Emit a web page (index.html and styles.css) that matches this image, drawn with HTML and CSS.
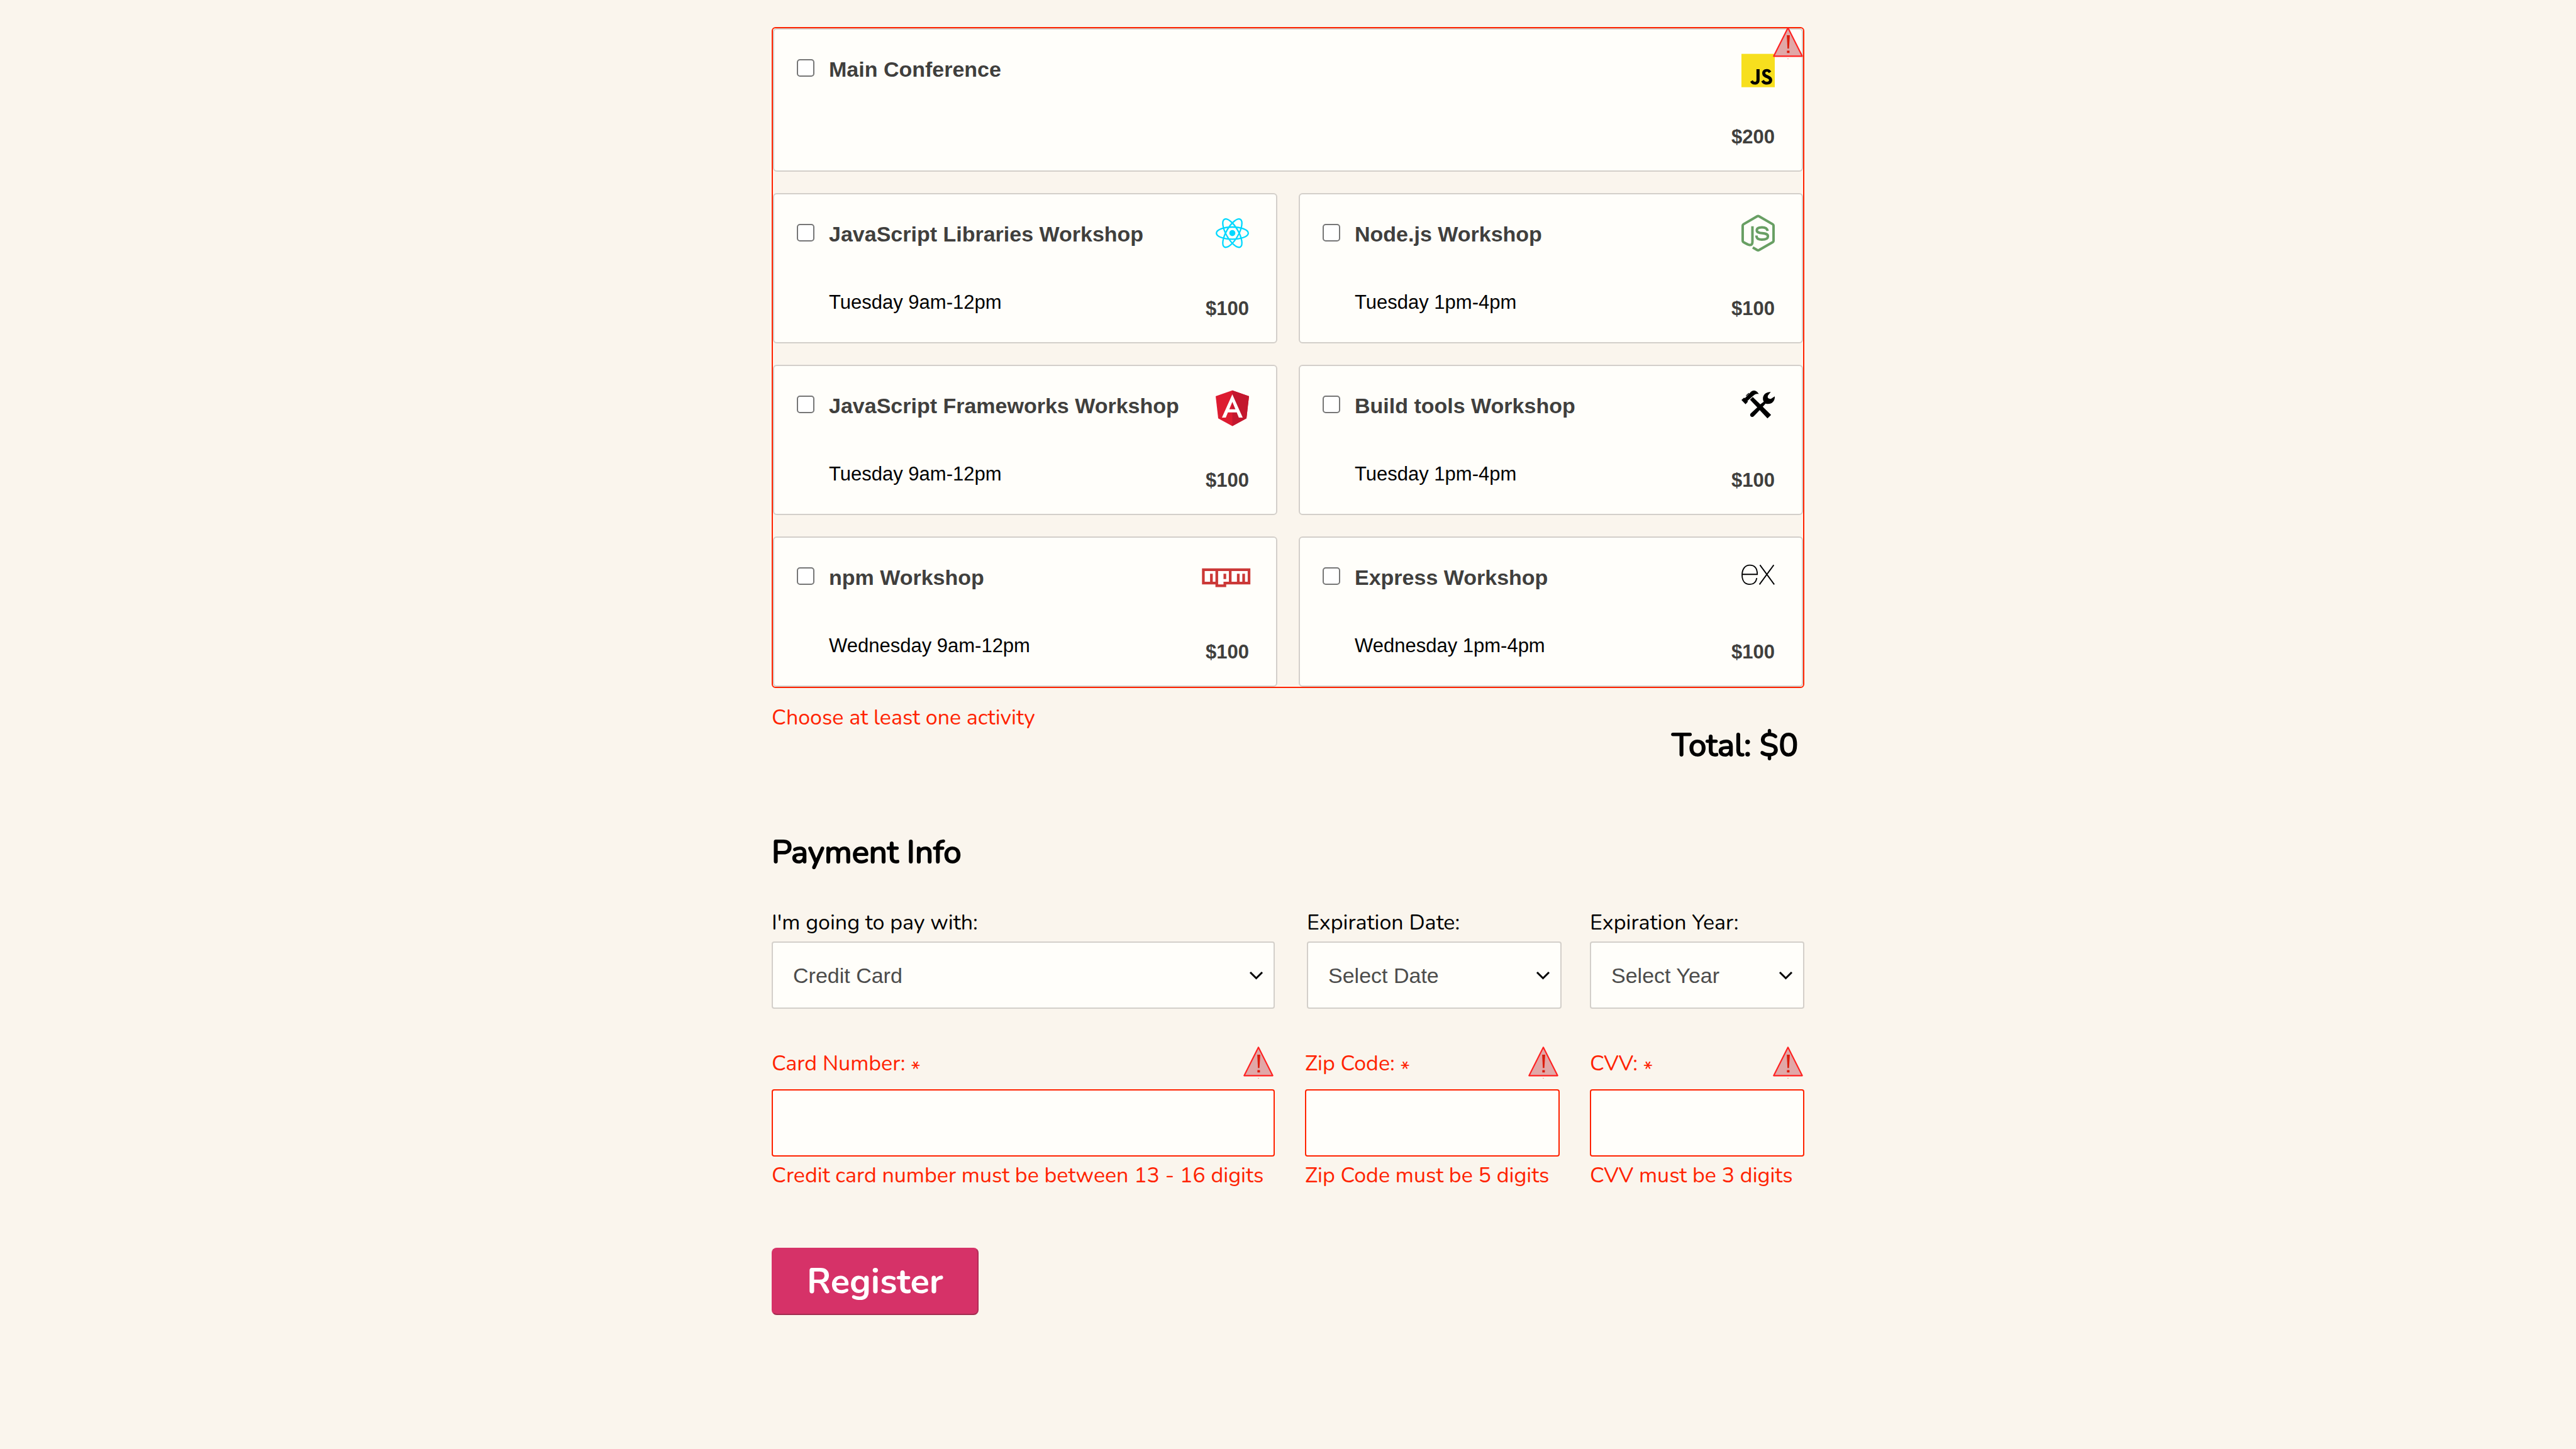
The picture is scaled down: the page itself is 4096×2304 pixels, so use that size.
FILE: index.html
```html
<!DOCTYPE html>
<html lang="en">
<head>
<meta charset="utf-8">
<title>Register for the conference</title>
<link rel="stylesheet" href="styles.css">
</head>
<body>
<svg class="defs" aria-hidden="true">
  <symbol id="warning" viewBox="0 0 90 97">
    <path d="M45 4 2.500 88.500H87.500Z" fill="#e1a7a7" stroke="#ff2222" stroke-width="4" stroke-linejoin="round"/>
    <path d="M41.500 26H50.500L48 66H43.500Z" fill="#da1c0c"/>
    <rect x="42" y="72" width="7.500" height="7" fill="#da1c0c"/>
    <rect x="43.500" y="96" width="3" height="1" fill="#ff2222"/>
  </symbol>
</svg>

<form class="form" novalidate>
  <fieldset class="activities">
    <label class="card card-wide">
      <input type="checkbox" class="check" name="all">
      <span class="info"><span class="title">Main Conference</span></span>
      <span class="side">
        <svg class="icon" viewBox="0 0 100 131" aria-hidden="true">
          <rect y="12" width="100" height="100" fill="#f7df1e"/>
          <path transform="translate(0 12) scale(.15873)" d="m423.200 492.190c12.690 20.720 29.200 35.950 58.400 35.950 24.530 0 40.200-12.260 40.200-29.200 0-20.300-16.100-27.490-43.100-39.300l-14.800-6.350c-42.720-18.200-71.100-41-71.100-89.200 0-44.400 33.830-78.200 86.700-78.200 37.640 0 64.700 13.100 84.200 47.400l-46.100 29.600c-10.150-18.200-21.100-25.370-38.100-25.370-17.340 0-28.330 11-28.330 25.370 0 17.760 11 24.950 36.400 35.950l14.800 6.340c50.300 21.570 78.700 43.560 78.700 93 0 53.300-41.870 82.500-98.100 82.500-54.980 0-90.500-26.200-107.880-60.540zm-209.130 5.130c9.300 16.500 17.760 30.450 38.100 30.450 19.450 0 31.720-7.610 31.720-37.200v-201.300h59.200v202.100c0 61.300-35.940 89.200-88.400 89.200-47.400 0-74.850-24.530-88.810-54.075z"/>
        </svg>
        <span class="price">$200</span>
      </span>
    </label>

    <label class="card">
      <input type="checkbox" class="check" name="js-libs">
      <span class="info"><span class="title">JavaScript Libraries Workshop</span><span class="time">Tuesday 9am-12pm</span></span>
      <span class="side">
        <svg class="icon" viewBox="0 0 100 131" aria-hidden="true">
          <g transform="translate(50 55.5) scale(4.348)" fill="none" stroke="#00d8ff">
            <circle r="2.100" fill="#00d8ff" stroke="none"/>
            <ellipse rx="11" ry="4.200"/>
            <ellipse rx="11" ry="4.200" transform="rotate(60)"/>
            <ellipse rx="11" ry="4.200" transform="rotate(120)"/>
          </g>
        </svg>
        <span class="price">$100</span>
      </span>
    </label>

    <label class="card">
      <input type="checkbox" class="check" name="node">
      <span class="info"><span class="title">Node.js Workshop</span><span class="time">Tuesday 1pm-4pm</span></span>
      <span class="side">
        <svg class="icon" viewBox="0 0 100 131" aria-hidden="true">
          <g fill="none" stroke="#689f63" stroke-width="7.500">
            <path d="M33 35V82Q33 92 24 91 20 90.500 6 82.500 3.700 81 3.700 78V33Q3.700 30.500 6 29L47 5Q50 3.300 53 5L94 29Q96.300 30.500 96.300 33V78Q96.300 81 94 82.500L53 106Q50 107.800 47 106L34 98.500"/>
            <path d="M78.500 49C77 40 71 38 61.500 38 52 38 46 41 46 47 46 61 79.500 50 79.500 65 79.500 73 72 75 61 75 50 75 45 71 45 62.500"/>
          </g>
        </svg>
        <span class="price">$100</span>
      </span>
    </label>

    <label class="card">
      <input type="checkbox" class="check" name="js-frameworks">
      <span class="info"><span class="title">JavaScript Frameworks Workshop</span><span class="time">Tuesday 9am-12pm</span></span>
      <span class="side">
        <svg class="icon" viewBox="0 0 100 131" aria-hidden="true">
          <g transform="translate(-17.130 -4.110) scale(.537)">
            <path fill="#dd1b30" d="M125 30 31.900 63.200 46.100 186.300 125 230 203.900 186.300 218.100 63.200Z"/>
            <path fill="#c3172e" d="M125 30V230L203.900 186.300 218.100 63.200Z"/>
            <path fill="#fff" d="M125 52.100 66.800 182.600H88.500L100.200 153.400H149.600L161.300 182.600H183ZM142 135.400H108L125 94.500Z"/>
          </g>
        </svg>
        <span class="price">$100</span>
      </span>
    </label>

    <label class="card">
      <input type="checkbox" class="check" name="build-tools">
      <span class="info"><span class="title">Build tools Workshop</span><span class="time">Tuesday 1pm-4pm</span></span>
      <span class="side">
        <svg class="icon" viewBox="0 0 100 131" aria-hidden="true">
          <path d="M0 41 8 34 10 36 25 20C32 12 42 8 52.300 23 45 21 40 24 36 28L18 44 19.300 46 12.300 53.700Z"/>
          <path d="M14 28.500 22.500 20.500" stroke="#000" stroke-width="2.500"/>
          <path d="M25.700 40 34 32 89 85.700 78 96Z"/>
          <path d="M28 81 47 63.400 57 53.700 67 46C61 36 65 17 88 17L80 27C76 35 82 39 89 37L100 30C101 45 90 56 72.300 51.700L64 61.400 54 72 37.300 89.500C31 96 22 88 28 81Z"/>
        </svg>
        <span class="price">$100</span>
      </span>
    </label>

    <label class="card">
      <input type="checkbox" class="check" name="npm">
      <span class="info"><span class="title">npm Workshop</span><span class="time">Wednesday 9am-12pm</span></span>
      <span class="side">
        <svg class="icon" viewBox="0 0 100 131" aria-hidden="true">
          <g transform="translate(-41 31) scale(8.060)">
            <path fill="#cb3837" d="M0 0h18v6H9v1H5V6H0Z"/>
            <path fill="#fff" fill-rule="evenodd" d="M1 5h2V2h1v3h1V1H1ZM6 1v5h2V5h2V1ZM8 2h1v2H8ZM11 1v4h2V2h1v3h1V2h1v3h1V1Z"/>
          </g>
        </svg>
        <span class="price">$100</span>
      </span>
    </label>

    <label class="card">
      <input type="checkbox" class="check" name="express">
      <span class="info"><span class="title">Express Workshop</span><span class="time">Wednesday 1pm-4pm</span></span>
      <span class="side">
        <svg class="icon" viewBox="0 0 100 131" aria-hidden="true">
          <g fill="none" stroke="#000" stroke-width="3.500">
            <path d="M2 49H47.500C47.500 32 40 21.500 25 21.500 10 21.500 2 34 2 51 2 68 10 79 25 79 37 79 44 72 46 60"/>
            <path d="M55.500 21 98.500 79.500M97 21 54 79.500"/>
          </g>
        </svg>
        <span class="price">$100</span>
      </span>
    </label>

    <svg class="warning warning-corner" aria-hidden="true"><use href="#warning"/></svg>
  </fieldset>

  <div class="summary">
    <p class="hint">Choose at least one activity</p>
    <p class="total">Total: $0</p>
  </div>

  <h2 class="heading">Payment Info</h2>

  <div class="fields fields-method">
    <div class="field">
      <label for="payment">I'm going to pay with:</label>
      <div class="select">
        <select id="payment"><option>Credit Card</option></select>
        <svg class="chevron" viewBox="0 0 23 14" aria-hidden="true"><path d="M2 2 11.500 11.500 21 2"/></svg>
      </div>
    </div>
    <div class="expiration">
      <div class="field">
        <label for="exp-month">Expiration Date:</label>
        <div class="select">
          <select id="exp-month"><option>Select Date</option></select>
          <svg class="chevron" viewBox="0 0 23 14" aria-hidden="true"><path d="M2 2 11.500 11.500 21 2"/></svg>
        </div>
      </div>
      <div class="field">
        <label for="exp-year">Expiration Year:</label>
        <div class="select">
          <select id="exp-year"><option>Select Year</option></select>
          <svg class="chevron" viewBox="0 0 23 14" aria-hidden="true"><path d="M2 2 11.500 11.500 21 2"/></svg>
        </div>
      </div>
    </div>
  </div>

  <div class="fields fields-card">
    <div class="field">
      <div class="field-head">
        <label for="cc-num">Card Number: <span class="asterisk">*</span></label>
        <svg class="warning" aria-hidden="true"><use href="#warning"/></svg>
      </div>
      <input class="text" type="text" id="cc-num">
      <p class="hint">Credit card number must be between 13 - 16 digits</p>
    </div>
    <div class="field">
      <div class="field-head">
        <label for="zip">Zip Code: <span class="asterisk">*</span></label>
        <svg class="warning" aria-hidden="true"><use href="#warning"/></svg>
      </div>
      <input class="text" type="text" id="zip">
      <p class="hint">Zip Code must be 5 digits</p>
    </div>
    <div class="field">
      <div class="field-head">
        <label for="cvv">CVV: <span class="asterisk">*</span></label>
        <svg class="warning" aria-hidden="true"><use href="#warning"/></svg>
      </div>
      <input class="text" type="text" id="cvv">
      <p class="hint">CVV must be 3 digits</p>
    </div>
  </div>

  <button class="register" type="submit">Register</button>
</form>
</body>
</html>
```
FILE: styles.css
```css
* {
  box-sizing: border-box;
}

body {
  margin: 0;
  background: #faf5ed;
  color: #000;
  font: 34px/44px Nunito, Lato, sans-serif;
}

p,
h2 {
  margin: 0;
}

.defs {
  display: none;
}

.form {
  max-width: 1642px;
  margin: 0 auto;
  padding: 43px 0 96px;
}

/* Activities */

.activities {
  position: relative;
  display: grid;
  grid-template-columns: 1fr 1fr;
  gap: 34px;
  min-width: 0;
  margin: 0;
  padding: 0;
  border: 2px solid #ff2200;
  border-radius: 6px;
}

.card {
  display: grid;
  grid-template-columns: 28px 1fr auto;
  column-gap: 23px;
  padding: 32px 43px 35px 36px;
  border: 2px solid #d3cfca;
  border-radius: 6px;
  background: #fffefa;
  font-family: "Liberation Sans", Arial, sans-serif;
}

.card-wide {
  grid-column: 1 / -1;
}

.check {
  appearance: none;
  width: 28px;
  height: 28px;
  margin: 15px 0 0;
  border: 2px solid #767676;
  border-radius: 5px;
  background: #fff;
}

.info {
  display: flex;
  flex-direction: column;
  gap: 71px;
  padding-top: 11px;
}

.title {
  color: #403f3d;
  font-weight: 700;
  line-height: 40px;
  white-space: nowrap;
}

.time {
  font-size: 31px;
  line-height: 36px;
}

.side {
  display: flex;
  flex-direction: column;
  align-items: flex-end;
  gap: 62px;
}

.card-wide .side {
  gap: 51px;
}

.icon {
  width: 53px;
  height: 70px;
  overflow: visible;
}

.price {
  color: #403f3d;
  font-size: 31px;
  font-weight: 700;
  line-height: 36px;
}

.warning {
  flex: none;
  width: 48px;
  height: 52px;
}

.warning-corner {
  position: absolute;
  top: -3px;
  right: 0;
}

.summary {
  display: flex;
  justify-content: space-between;
  padding: 25px 10px 0 0;
}

.hint {
  color: #ff2200;
}

/* The regular cut, thickened by a stroke */
.total,
.heading {
  font-size: 51px;
  font-weight: 400;
  line-height: 62px;
  -webkit-text-stroke: 2px #000;
}

.total {
  margin-top: 35px;
}

.heading {
  margin-top: 108px;
}

/* Payment */

.fields {
  display: grid;
  margin-top: 59px;
}

.fields-method {
  grid-template-columns: 800fr 791fr;
  column-gap: 51px;
}

.expiration {
  display: grid;
  grid-template-columns: 405fr 341fr;
  column-gap: 45px;
}

.fields-card {
  grid-template-columns: 800fr 405fr 341fr;
  column-gap: 48px;
  color: #ff2200;
}

.field {
  display: flex;
  flex-direction: column;
  min-width: 0;
  white-space: nowrap;
}

.select {
  display: grid;
  align-items: center;
  margin-top: 8px;
}

.select select,
.text {
  appearance: none;
  width: 100%;
  height: 107px;
  padding: 0 32px;
  border: 2px solid #d3cfca;
  border-radius: 4px;
  background: #fffefa;
  color: #4c4c4b;
  font: 34px/40px "Liberation Sans", Arial, sans-serif;
}

.select > * {
  grid-area: 1 / 1;
}

.chevron {
  justify-self: end;
  width: 23px;
  height: 14px;
  margin-right: 18px;
  fill: none;
  stroke: #000;
  stroke-width: 3px;
  pointer-events: none;
}

.field-head {
  display: flex;
  align-items: center;
  justify-content: space-between;
  padding-right: 2px;
}

.field-head label {
  padding-top: 4px;
}

.asterisk {
  line-height: 0;
  vertical-align: -10px;
}

.text {
  margin: 17px 0 8px;
  border-color: #ff2200;
}

.register {
  height: 107px;
  margin-top: 93px;
  padding: 0 54px;
  border: 2px solid #d63268;
  border-right-color: #b02c57;
  border-bottom-color: #a12d50;
  border-radius: 8px;
  background: #d63268;
  color: #fff;
  font: 700 56px/66px Nunito, Lato, sans-serif;
}
```
